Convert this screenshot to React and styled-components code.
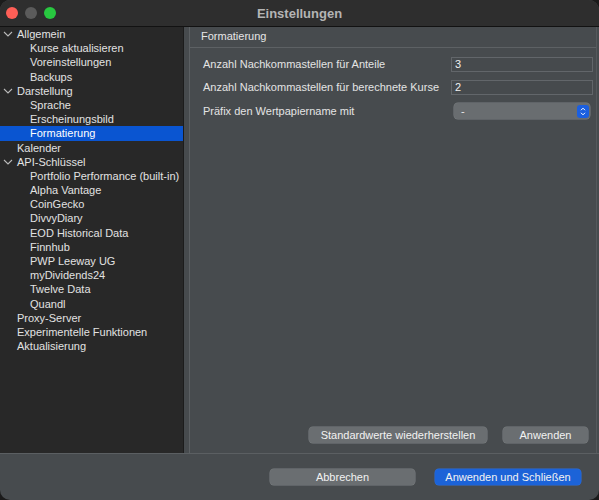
import React from "react";
import styled, { createGlobalStyle } from "styled-components";

const Global = createGlobalStyle`
  html, body { margin: 0; padding: 0; background: #1b1b1b; }
  body { width: 599px; height: 500px; overflow: hidden; font-family: "Liberation Sans", Arial, sans-serif; }
  * { box-sizing: border-box; }
`;

const Win = {
  Frame: styled.div`
    width: 599px; height: 500px;
    display: flex; flex-direction: column;
    background: #474b4e;
    border-radius: 10px;
    overflow: hidden;
  `,
  TitleBar: styled.div`
    position: relative;
    height: 27px; flex: 0 0 27px;
    background: #2e2e2e;
    border-bottom: 1px solid #121212;
    display: flex; align-items: center; justify-content: center;
  `,
  Lights: styled.div`
    position: absolute; left: 6px; top: 7px;
    display: flex; gap: 7px;
  `,
  Light: styled.span`
    width: 12px; height: 12px; border-radius: 50%;
    background: ${(p) => p.color};
  `,
  Title: styled.div`
    font-size: 13px; font-weight: bold; color: #b4b4b4;
  `,
  Body: styled.div`
    flex: 1; display: flex; min-height: 0;
    border-bottom: 1px solid #5b5f62;
  `,
  Footer: styled.div`
    flex: 0 0 46px;
    display: flex; align-items: center; justify-content: flex-end;
    gap: 20px; padding: 0 18px 0 0;
  `,
};

const Side = {
  List: styled.div`
    width: 184px; flex: 0 0 184px;
    background: #282828;
    border-right: 1px solid #1c1c1c;
  `,
  Item: styled.div`
    position: relative;
    height: 14.2px; line-height: 14.2px;
    padding-left: ${(p) => (p.level ? 30 : 17)}px;
    font-size: 11px;
    white-space: nowrap;
    background: ${(p) => (p.selected ? "#0a55d1" : "transparent")};
    color: ${(p) => (p.selected ? "#ffffff" : "#e2e2e2")};
  `,
  Chevron: styled.svg`
    position: absolute; left: 3px; top: 4px;
  `,
};

const Pane = {
  Outer: styled.div`
    flex: 1; display: flex;
    padding-left: 5px;
    padding-right: 2px;
  `,
  Panel: styled.div`
    flex: 1; display: flex; flex-direction: column;
    border-left: 1px solid #5c6063;
    border-right: 1px solid #55595c;
  `,
  Header: styled.div`
    height: 21px; flex: 0 0 21px;
    border-bottom: 1px solid #5d6164;
    padding-left: 11px;
    font-size: 11px; line-height: 19px; color: #e6e6e6;
  `,
  Form: styled.div`
    display: flex; flex-direction: column; gap: 9px;
    padding: 9px 3px 0 13px;
  `,
  Row: styled.div`
    display: flex; align-items: center; justify-content: space-between;
    height: 14px;
    margin-top: ${(p) => p.shift || 0}px;
  `,
  Label: styled.span`
    font-size: 11px; color: #e4e4e4;
  `,
  Input: styled.div`
    width: 142px; height: 15px;
    border: 1px solid #62666a;
    background: #464a4d;
    font-size: 11px; color: #f0f0f0;
    padding-left: 3px; line-height: 13px;
  `,
  Select: styled.div`
    width: 136px; height: 16px; margin-right: 3px;
    border-radius: 4px;
    background: #696d70;
    box-shadow: 0 0 0 0.5px #7a7e81;
    display: flex; align-items: center; justify-content: space-between;
    padding: 0 1px 0 7px;
    font-size: 11px; color: #e8e8e8;
  `,
  Stepper: styled.span`
    width: 12px; height: 13px; border-radius: 3px;
    background: #1b5fe0;
    display: flex; align-items: center; justify-content: center;
  `,
  Spacer: styled.div` flex: 1; `,
  Actions: styled.div`
    display: flex; justify-content: flex-end; gap: 16px;
    padding: 0 8px 10px 0;
  `,
};

const Button = styled.div`
  width: ${(p) => p.w}px; height: 16px;
  border-radius: 4px;
  background: ${(p) => (p.primary ? "#1c63d8" : "#6a6e71")};
  box-shadow: 0 0 0 0.5px ${(p) => (p.primary ? "#2b6fe0" : "#7b7f82")};
  display: flex; align-items: center; justify-content: center;
  font-size: 11px; color: #f2f2f2;
`;

const TREE = [
  { label: "Allgemein", open: true },
  { label: "Kurse aktualisieren", level: 1 },
  { label: "Voreinstellungen", level: 1 },
  { label: "Backups", level: 1 },
  { label: "Darstellung", open: true },
  { label: "Sprache", level: 1 },
  { label: "Erscheinungsbild", level: 1 },
  { label: "Formatierung", level: 1, selected: true },
  { label: "Kalender" },
  { label: "API-Schlüssel", open: true },
  { label: "Portfolio Performance (built-in)", level: 1 },
  { label: "Alpha Vantage", level: 1 },
  { label: "CoinGecko", level: 1 },
  { label: "DivvyDiary", level: 1 },
  { label: "EOD Historical Data", level: 1 },
  { label: "Finnhub", level: 1 },
  { label: "PWP Leeway UG", level: 1 },
  { label: "myDividends24", level: 1 },
  { label: "Twelve Data", level: 1 },
  { label: "Quandl", level: 1 },
  { label: "Proxy-Server" },
  { label: "Experimentelle Funktionen" },
  { label: "Aktualisierung" },
];

const App = () => {
  return (
    <>
      <Global />
      <Win.Frame>
        <Win.TitleBar>
          <Win.Lights>
            <Win.Light color="#fe5f57" />
            <Win.Light color="#5b5b5b" />
            <Win.Light color="#28c840" />
          </Win.Lights>
          <Win.Title>Einstellungen</Win.Title>
        </Win.TitleBar>
        <Win.Body>
          <Side.List>
            {TREE.map((item) => (
              <Side.Item key={item.label} level={item.level} selected={item.selected}>
                {item.open && (
                  <Side.Chevron width="10" height="6" viewBox="0 0 10 6">
                    <path d="M1 1 L5 5 L9 1" fill="none" stroke="#b8b8b8" strokeWidth="1.1" />
                  </Side.Chevron>
                )}
                {item.label}
              </Side.Item>
            ))}
          </Side.List>
          <Pane.Outer>
            <Pane.Panel>
              <Pane.Header>Formatierung</Pane.Header>
              <Pane.Form>
                <Pane.Row>
                  <Pane.Label>Anzahl Nachkommastellen für Anteile</Pane.Label>
                  <Pane.Input>3</Pane.Input>
                </Pane.Row>
                <Pane.Row>
                  <Pane.Label>Anzahl Nachkommastellen für berechnete Kurse</Pane.Label>
                  <Pane.Input>2</Pane.Input>
                </Pane.Row>
                <Pane.Row shift={1}>
                  <Pane.Label>Präfix den Wertpapiername mit</Pane.Label>
                  <Pane.Select>
                    <span>-</span>
                    <Pane.Stepper>
                      <svg width="6" height="9" viewBox="0 0 6 9">
                        <path d="M1 3.2 L3 1.2 L5 3.2 M1 5.8 L3 7.8 L5 5.8" fill="none" stroke="#fff" strokeWidth="1" />
                      </svg>
                    </Pane.Stepper>
                  </Pane.Select>
                </Pane.Row>
              </Pane.Form>
              <Pane.Spacer />
              <Pane.Actions>
                <Button w={178}>Standardwerte wiederherstellen</Button>
                <Button w={85}>Anwenden</Button>
              </Pane.Actions>
            </Pane.Panel>
          </Pane.Outer>
        </Win.Body>
        <Win.Footer>
          <Button w={145}>Abbrechen</Button>
          <Button w={146} primary>Anwenden und Schließen</Button>
        </Win.Footer>
      </Win.Frame>
    </>
  );
};

export default App;
